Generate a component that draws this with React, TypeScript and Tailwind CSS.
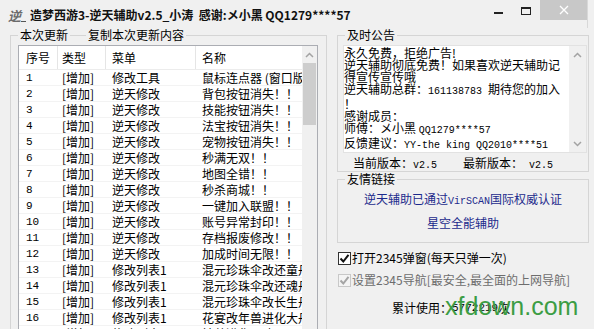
import React from "react"

const rows: [string, string][] = [
    ["修改工具", "鼠标连点器 (窗口版)"],
    ["逆天修改", "背包按钮消失！！"],
    ["逆天修改", "技能按钮消失！！"],
    ["逆天修改", "法宝按钮消失！！"],
    ["逆天修改", "宠物按钮消失！！"],
    ["逆天修改", "秒满无双！！"],
    ["逆天修改", "地图全错！！"],
    ["逆天修改", "秒杀商城！！"],
    ["逆天修改", "一键加入联盟！！"],
    ["逆天修改", "账号异常封印！！"],
    ["逆天修改", "存档报废修改！！"],
    ["逆天修改", "加成时间无限！！"],
    ["修改列表1", "混元珍珠伞改还童丹"],
    ["修改列表1", "混元珍珠伞改还魂丹"],
    ["修改列表1", "混元珍珠伞改长生丹"],
    ["修改列表1", "花宴改年兽进化大丹"],
    ["修改列表1", "神兽进化丹改天"],
]

const Chevron = ({ down }: { down?: boolean }) => (
    <svg width="9" height="6" viewBox="0 0 9 6">
        <polyline
            points={down ? "1,1 4.5,4.5 8,1" : "1,5 4.5,1.5 8,5"}
            fill="none"
            stroke="#a3a3a3"
            strokeWidth="1.5"
        />
    </svg>
)

const Check = ({ color }: { color: string }) => (
    <svg width="11" height="11" viewBox="0 0 11 11">
        <polyline points="1.5,5.5 4.3,8.5 9.5,1.8" fill="none" stroke={color} strokeWidth="2" />
    </svg>
)

const GroupTop = ({ children }: { children: React.ReactNode }) => (
    <div className="flex h-[14px]">
        <div className="w-[8px] h-[7px] self-end border-t border-l border-[#d5d5d5]" />
        <span className="px-[2px] leading-[14px]">{children}</span>
        <div className="flex-1 h-[7px] self-end border-t border-r border-[#d5d5d5]" />
    </div>
)

export default function App() {
    return (
        <div className="relative w-[594px] h-[329px] overflow-hidden bg-[#f0f0f0] text-[12px] text-black font-['Noto_Sans_CJK_SC',sans-serif]">
            {/* title bar */}
            <div className="flex h-[28px]">
                <div className="flex flex-1 items-center h-[18px] mt-[6px] pl-[8px]">
                    <div className="flex items-end w-[22px] h-[16px]">
                        <span className="italic font-bold text-[13px] leading-[14px] text-[#6b6b6b]">逆</span>
                        <div className="w-[5px] h-[1px] bg-[#555] mb-[1px]" />
                    </div>
                    <span className="font-bold text-[12px] whitespace-pre text-[#111]">
                        造梦西游3-逆天辅助v2.5_小涛  感谢:メ小黑 QQ1279****57
                    </span>
                </div>
                <div className="flex w-[28px] h-[22px] items-center justify-center">
                    <div className="w-[9px] h-[2px] bg-[#222] mt-[4px]" />
                </div>
                <div className="flex w-[28px] h-[22px] items-center justify-center">
                    <div className="w-[10px] h-[8px] border border-t-2 border-[#222]" />
                </div>
                <div className="flex w-[47px] h-[20px] items-center justify-center bg-[#c8c8c8]">
                    <svg width="10" height="10" viewBox="0 0 10 10">
                        <path d="M1 1 L9 9 M9 1 L1 9" stroke="#fff" strokeWidth="1.3" />
                    </svg>
                </div>
                <div className="w-[7px] border-l border-[#d8d8d8]" />
            </div>

            <div className="flex pl-[10px]">
                {/* left group: update list */}
                <div className="w-[317px]">
                    <div className="flex h-[14px]">
                        <div className="w-[8px] h-[7px] self-end border-t border-l border-[#d5d5d5]" />
                        <span className="px-[2px] leading-[14px]">本次更新</span>
                        <div className="w-[16px] h-[7px] self-end border-t border-[#d5d5d5]" />
                        <span className="px-[2px] leading-[14px]">复制本次更新内容</span>
                        <div className="flex-1 h-[7px] self-end border-t border-r border-[#d5d5d5]" />
                    </div>
                    <div className="h-[300px] border-l border-r border-[#d5d5d5] px-[7px] pt-[3px]">
                        <div className="flex w-[300px] h-[320px] border border-[#abadb3] bg-white">
                            <div className="flex-1 overflow-hidden">
                                <div className="flex h-[24px] border-b border-[#ececec] text-[12px]">
                                    <div className="flex items-center w-[39px] pl-[7px] border-r border-[#e5e5e5]">序号</div>
                                    <div className="flex items-center w-[48px] pl-[4px] border-r border-[#e5e5e5]">类型</div>
                                    <div className="flex items-center w-[90px] pl-[6px] border-r border-[#e5e5e5]">菜单</div>
                                    <div className="flex items-center flex-1 pl-[6px]">名称</div>
                                </div>
                                {rows.map((row, index) => (
                                    <div className="flex h-[16px] leading-[16px] border-b border-[#f3f3f3] whitespace-nowrap" key={index}>
                                        <div className="w-[39px] pl-[7px] font-['Liberation_Mono',monospace] text-[11px]">{index + 1}</div>
                                        <div className="w-[48px] pl-[4px]">[增加]</div>
                                        <div className="w-[90px] pl-[6px]">{row[0]}</div>
                                        <div className="flex-1 pl-[6px] overflow-hidden">{row[1]}</div>
                                    </div>
                                ))}
                            </div>
                            <div className="flex flex-col w-[15px] bg-[#f0f0f0]">
                                <div className="flex items-center justify-center h-[17px]">
                                    <Chevron />
                                </div>
                                <div className="h-[62px] mx-[1px] bg-[#cdcdcd]" />
                            </div>
                        </div>
                    </div>
                </div>

                {/* right column */}
                <div className="ml-[10px] w-[252px]">
                    <GroupTop>及时公告</GroupTop>
                    <div className="border-l border-r border-b border-[#d5d5d5] pl-[5px] pr-[1px] pt-[3px]">
                        <div className="flex h-[108px] border border-[#e2e2e2] bg-white">
                            <div className="flex-1 pt-[1px] leading-[12px] text-[12px] whitespace-nowrap">
                                <div>永久免费，拒绝广告!</div>
                                <div>逆天辅助彻底免费！如果喜欢逆天辅助记</div>
                                <div>得宣传宣传哦</div>
                                <div>
                                    逆天辅助总群：<span className="font-['Liberation_Mono',monospace] text-[10px]">161138783 </span>期待您的加入
                                </div>
                                <div>！</div>
                                <div>感谢成员：</div>
                                <div>
                                    师傅：メ小黑 <span className="font-['Liberation_Mono',monospace] text-[10px]">QQ1279****57</span>
                                </div>
                                <div>
                                    反馈建议：<span className="font-['Liberation_Mono',monospace] text-[10px]">YY-the king QQ2010****51</span>
                                </div>
                            </div>
                            <div className="flex flex-col justify-between w-[17px] bg-[#f0f0f0]">
                                <div className="flex items-center justify-center h-[17px]">
                                    <Chevron />
                                </div>
                                <div className="flex items-center justify-center h-[17px]">
                                    <Chevron down />
                                </div>
                            </div>
                        </div>
                        <div className="flex h-[16px] mt-[2px] leading-[16px] pl-[10px]">
                            <span className="w-[110px]">
                                当前版本：<span className="font-['Liberation_Mono',monospace] text-[10px]">v2.5</span>
                            </span>
                            <span>
                                最新版本：<span className="font-['Liberation_Mono',monospace] text-[10px]"> v2.5</span>
                            </span>
                        </div>
                    </div>

                    <GroupTop>友情链接</GroupTop>
                    <div className="flex flex-col items-center border-l border-r border-b border-[#d5d5d5] pt-[5px] pb-[11px] text-[#1c2a8c]">
                        <div className="h-[16px] leading-[16px]">
                            逆天辅助已通过<span className="font-['Liberation_Mono',monospace] text-[10px]">VirSCAN</span>国际权威认证
                        </div>
                        <div className="h-[16px] leading-[16px] mt-[8px]">星空全能辅助</div>
                    </div>

                    <div className="flex items-center h-[16px] mt-[7px] pl-[1px]">
                        <div className="flex items-center justify-center w-[13px] h-[13px] border border-[#333] bg-white">
                            <Check color="#111" />
                        </div>
                        <span className="ml-[1px]">打开2345弹窗(每天只弹一次)</span>
                    </div>
                    <div className="flex items-center h-[16px] mt-[6px] pl-[1px] text-[#6d6d6d]">
                        <div className="flex items-center justify-center w-[13px] h-[13px] border border-[#c8c8c8] bg-[#f4f4f4]">
                            <Check color="#a5a5a5" />
                        </div>
                        <span className="ml-[1px]">设置2345导航[最安全,最全面的上网导航]</span>
                    </div>
                    <div className="flex h-[16px] mt-[12px] pl-[55px] leading-[16px]">
                        累计使用：<span className="font-['Liberation_Mono',monospace] text-[11px]">5772219</span>次
                    </div>
                </div>
            </div>

            <div className="absolute left-[445px] top-[294px] text-[25px] leading-none font-['Liberation_Sans',Arial,sans-serif] text-[#3c9d44]">
                xfdown.com
            </div>
        </div>
    )
}
